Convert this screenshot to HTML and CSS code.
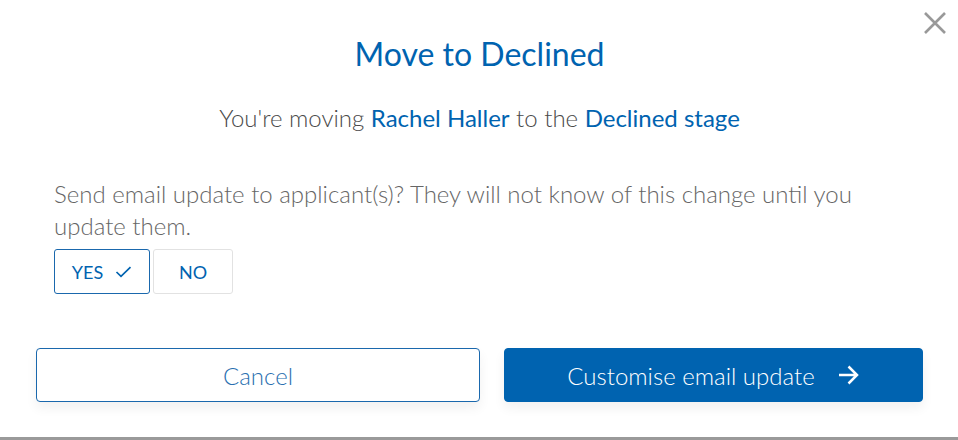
FILE: index.html
```html
<!DOCTYPE html>
<html>
<head>
<meta charset="utf-8">
<link rel="stylesheet" href="styles.css">
</head>
<body>
<div class="modal">
  <button class="close" aria-label="Close">
    <svg width="24" height="24" viewBox="0 0 24 24"><path d="M2 2 L22 22 M22 2 L2 22" stroke="#999" stroke-width="2.6" fill="none"/></svg>
  </button>
  <h1 class="title">Move to Declined</h1>
  <p class="subtitle">You're moving <span class="hl">Rachel Haller</span> to the <span class="hl">Declined stage</span></p>
  <p class="question">Send email update to applicant(s)? They will not know of this change until you update them.</p>
  <div class="toggle">
    <button class="opt opt-active">YES
      <svg width="17" height="12" viewBox="0 0 17 12"><path d="M1.5 6 L6 10.3 L15.5 1.2" stroke="#0063b0" stroke-width="1.7" fill="none"/></svg>
    </button>
    <button class="opt">NO</button>
  </div>
  <div class="actions">
    <button class="btn btn-outline">Cancel</button>
    <button class="btn btn-primary">Customise email update
      <svg width="23" height="22" viewBox="0 0 23 22"><path d="M2 11 H20 M11.5 2.5 L20 11 L11.5 19.5" stroke="#fff" stroke-width="2.5" fill="none"/></svg>
    </button>
  </div>
</div>
</body>
</html>
```
FILE: styles.css
```css
html, body {
  margin: 0;
  padding: 0;
}
body {
  background: #9a9a9a;
  width: 958px;
  height: 440px;
  overflow: hidden;
  font-family: Lato, "Open Sans", sans-serif;
}
.modal {
  position: relative;
  background: #fff;
  width: 958px;
  height: 437px;
  box-sizing: border-box;
  padding: 33px 35px 0 36px;
}
.close {
  position: absolute;
  top: 11px;
  right: 11px;
  background: none;
  border: none;
  padding: 0;
  width: 24px;
  height: 24px;
  cursor: pointer;
}
.close svg { display: block; }
.title {
  margin: 0;
  text-align: center;
  font-weight: 400;
  font-size: 32px;
  line-height: 42px;
  color: #0063b0;
}
.subtitle {
  margin: 28px 0 0;
  text-align: center;
  font-weight: 300;
  font-size: 24px;
  line-height: 30px;
  color: #4a4a4a;
}
.hl {
  font-weight: 400;
  color: #0063b0;
}
.question {
  margin: 45px 0 0 18px;
  width: 800px;
  font-weight: 300;
  font-size: 24px;
  line-height: 32px;
  color: #666;
}
.toggle {
  display: flex;
  gap: 3px;
  margin: 7px 0 0 18px;
}
.opt {
  height: 45px;
  width: 80px;
  background: #fff;
  border: 1px solid #e2e2e2;
  border-radius: 3px;
  font-family: Lato, sans-serif;
  font-weight: 400;
  font-size: 18px;
  color: #0063b0;
  display: flex;
  align-items: center;
  justify-content: center;
  gap: 12px;
  padding: 0;
}
.opt-active {
  width: 96px;
  border-color: #1a68ad;
}
.actions {
  display: flex;
  gap: 24px;
  margin-top: 54px;
}
.btn {
  height: 54px;
  border-radius: 4px;
  font-family: Lato, sans-serif;
  font-weight: 300;
  font-size: 24px;
  display: flex;
  align-items: center;
  justify-content: center;
  gap: 22px;
  box-shadow: 0 6px 12px rgba(0,0,0,0.06);
  padding: 0;
}
.btn-outline {
  width: 444px;
  background: #fff;
  border: 1px solid #1a68ad;
  color: #2a6fb0;
}
.btn-primary {
  width: 419px;
  background: #0063b0;
  border: 1px solid #0063b0;
  color: #fff;
}
```
